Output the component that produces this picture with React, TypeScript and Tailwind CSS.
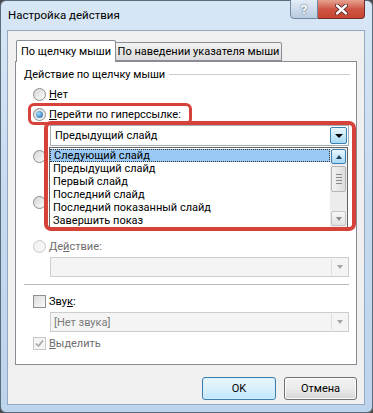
import { ReactNode } from 'react';

function Radio({ checked = false, disabled = false }: { checked?: boolean; disabled?: boolean }) {
  return (
    <span
      className={`flex h-[13px] w-[13px] shrink-0 items-center justify-center rounded-full border ${
        disabled ? 'border-[#c8c8c8] bg-[#f4f4f4]' : 'border-[#8c8c8c] bg-linear-to-br from-[#d6d6d6] to-[#fcfcfc]'
      }`}
    >
      {checked && <span className="h-[7px] w-[7px] rounded-full bg-[radial-gradient(circle_at_35%_35%,#9adcff,#1b5e9f)]" />}
    </span>
  );
}

function Check({ checked = false, disabled = false }: { checked?: boolean; disabled?: boolean }) {
  return (
    <span
      className={`flex h-[13px] w-[13px] shrink-0 items-center justify-center border ${
        disabled ? 'border-[#c8c8c8] bg-[#f4f4f4]' : 'border-[#8e8f8f] bg-linear-to-br from-[#dcdcdc] to-[#fafafa]'
      }`}
    >
      {checked && (
        <svg width="9" height="9" viewBox="0 0 9 9">
          <path d="M1 4.5 L3.5 7 L8 1.5" fill="none" stroke={disabled ? '#a8a8a8' : '#2a4f7c'} strokeWidth="1.6" />
        </svg>
      )}
    </span>
  );
}

function Row({ children }: { children?: ReactNode }) {
  return <div className="ml-[17px] flex h-[20px] items-center gap-[3px] whitespace-nowrap">{children}</div>;
}

function DisabledCombo({ text = '' }: { text?: string }) {
  return (
    <div className="ml-[34px] mr-[7px] mt-px flex h-[20px] items-center border border-[#cdcdcd] bg-[#f4f4f4]">
      <span className="flex-1 pl-[3px] text-[#7a7a7a]">{text}</span>
      <span className="mr-px flex h-[16px] w-[16px] items-center justify-center border-l border-[#dedede]">
        <span className="h-0 w-0 border-x-[3.5px] border-t-[4px] border-x-transparent border-t-[#a5a5a5]" />
      </span>
    </div>
  );
}

const items = ['Следующий слайд', 'Предыдущий слайд', 'Первый слайд', 'Последний слайд', 'Последний показанный слайд', 'Завершить показ'];

export default function App() {
  return (
    <div className="relative h-[413px] w-[373px] overflow-hidden bg-[#4a4a4a] font-['Roboto','Liberation_Sans',sans-serif] text-[11px] leading-none text-black">
      {/* window frame */}
      <div className="flex h-[413px] flex-col rounded-[6px] border border-[#5b6b7c] bg-linear-to-b from-[#d8e7f6] via-[#c6daef] to-[#bcd4ec] pb-[7px] pl-[6px] pr-[7px]">
        {/* title bar */}
        <div className="flex h-[29px] items-start">
          <span className="mt-[9px] pl-[1px] text-[11.5px] text-black">Настройка действия</span>
          <div className="ml-auto mt-[-2px] flex">
            <div className="flex h-[20px] w-[28px] items-center justify-center rounded-bl-[4px] border border-[#6f87a3] bg-linear-to-b from-[#e3ecf6] to-[#b9cbe0] text-[13px] font-bold text-white [text-shadow:0_0_2px_#34495e]">
              ?
            </div>
            <div className="flex h-[20px] w-[47px] items-center justify-center rounded-br-[4px] border border-l-0 border-[#6f2d2a] bg-linear-to-b from-[#e7a290] via-[#cf5646] to-[#c7432f]">
              <svg width="13" height="11" viewBox="0 0 13 11">
                <path d="M2 1.5 L11 9.5 M11 1.5 L2 9.5" stroke="#4a2020" strokeWidth="4" strokeLinecap="round" />
                <path d="M2 1.5 L11 9.5 M11 1.5 L2 9.5" stroke="#ffffff" strokeWidth="2.4" strokeLinecap="round" />
              </svg>
            </div>
          </div>
        </div>

        {/* client area */}
        <div className="flex flex-1 flex-col border border-[#93a9c1] bg-[#f0f0f0] px-[7px] pt-[9px]">
          {/* tabs */}
          <div className="relative z-10 -mb-px flex items-end whitespace-nowrap pl-px">
            <div className="flex h-[22px] w-[100px] items-center justify-center rounded-t-[2px] border border-b-0 border-[#898c95] bg-white pb-[1px]">
              По щелчку мыши
            </div>
            <div className="mb-px flex h-[19px] w-[166px] items-center justify-center rounded-tr-[2px] border border-l-0 border-[#898c95] bg-linear-to-b from-[#f2f2f2] to-[#dcdcdc]">
              По наведении указателя мыши
            </div>
          </div>

          {/* panel */}
          <div className="flex h-[304px] flex-col border border-[#898c95] bg-white pt-[2px]">
            <div className="flex h-[20px] items-center whitespace-nowrap pl-[8px] pr-[6px]">
              <span>Действие по щелчку мыши</span>
              <span className="ml-[4px] mt-px h-px flex-1 bg-[#c9ccd1]" />
            </div>
            <Row>
              <Radio />
              <span>
                <span className="underline">Н</span>ет
              </span>
            </Row>
            <Row>
              <Radio checked />
              <span>
                <span className="underline">П</span>ерейти по гиперссылке:
              </span>
            </Row>
            {/* combo */}
            <div className="ml-[34px] mr-[7px] mt-px flex h-[21px] items-center border border-[#a5acb5] bg-white">
              <span className="flex-1 pl-[4px]">Предыдущий слайд</span>
              <span className="mr-px flex h-[17px] w-[17px] items-center justify-center rounded-[2px] border border-[#3c7fb1] bg-linear-to-b from-[#eaf6fd] to-[#a7d9f5]">
                <span className="h-0 w-0 border-x-[4px] border-t-[4px] border-x-transparent border-t-black" />
              </span>
            </div>
            {/* radios hidden under the open list */}
            <Row>
              <Radio />
            </Row>
            <div className="h-[26px]" />
            <Row>
              <Radio />
            </Row>
            <div className="h-[24px]" />
            <Row>
              <Radio disabled />
              <span className="text-[#6d6d6d]">
                Де<span className="underline">й</span>ствие:
              </span>
            </Row>
            <DisabledCombo />
            <div className="ml-[8px] mr-[7px] mt-[7px] h-px bg-[#b4b9bf]" />
            <div className="mt-[6px]">
              <Row>
                <Check />
                <span>
                  Зву<span className="underline">к</span>:
                </span>
              </Row>
            </div>
            <DisabledCombo text="[Нет звука]" />
            <div className="mt-px">
              <Row>
                <Check checked disabled />
                <span className="text-[#6d6d6d]">
                  <span className="underline">В</span>ыделить
                </span>
              </Row>
            </div>
          </div>

          {/* buttons */}
          <div className="mt-[12px] flex justify-end gap-[8px]">
            <button className="h-[23px] w-[74px] rounded-[3px] border border-[#3c7fb1] bg-linear-to-b from-[#eaf6fd] via-[#d9f0fc] to-[#bee6fd] text-[11px] shadow-[inset_0_0_0_1px_#d6eefb]">
              OK
            </button>
            <button className="h-[23px] w-[73px] rounded-[3px] border border-[#707070] bg-linear-to-b from-[#f2f2f2] via-[#ebebeb] to-[#d5d5d5] text-[11px] shadow-[inset_0_0_0_1px_#fbfbfb]">
              Отмена
            </button>
          </div>
        </div>
      </div>

      {/* open dropdown list */}
      <div className="absolute left-[49px] top-[147px] flex h-[81px] w-[299px] border border-[#646464] bg-white">
        <div className="flex flex-1 flex-col whitespace-nowrap pt-px">
          {items.map((item, i) => (
            <div
              key={item}
              className={`flex h-[13px] items-center pl-[3px] ${i === 0 ? 'border border-dotted border-[#333] bg-[#99c9f4] pl-[2px]' : ''}`}
            >
              {item}
            </div>
          ))}
        </div>
        <div className="flex w-[17px] flex-col bg-[#ececec] p-px">
          <div className="flex h-[15px] items-center justify-center rounded-[2px] border border-[#3c7fb1] bg-linear-to-b from-[#eaf6fd] to-[#a7d9f5]">
            <span className="h-0 w-0 border-x-[3.5px] border-b-[4px] border-x-transparent border-b-[#1e3f5d]" />
          </div>
          <div className="mt-[2px] flex h-[26px] flex-col items-center justify-center gap-[2px] rounded-[2px] border border-[#b5b5b5] bg-linear-to-r from-[#f3f3f3] to-[#dcdcdc]">
            <span className="h-px w-[6px] bg-[#8a8a8a]" />
            <span className="h-px w-[6px] bg-[#8a8a8a]" />
            <span className="h-px w-[6px] bg-[#8a8a8a]" />
            <span className="h-px w-[6px] bg-[#8a8a8a]" />
          </div>
          <div className="flex-1" />
          <div className="flex h-[15px] items-center justify-center rounded-[2px] border border-[#c4c4c4] bg-linear-to-b from-[#f7f7f7] to-[#e2e2e2]">
            <span className="h-0 w-0 border-x-[3.5px] border-t-[4px] border-x-transparent border-t-[#8c8c8c]" />
          </div>
        </div>
      </div>

      {/* red highlights */}
      <div className="pointer-events-none absolute left-[28px] top-[103px] h-[22px] w-[164px] rounded-[6px] border-[3px] border-[#d6413a]" />
      <div className="pointer-events-none absolute left-[44px] top-[121px] h-[110px] w-[312px] rounded-[7px] border-[4px] border-[#d6413a]" />
    </div>
  );
}
